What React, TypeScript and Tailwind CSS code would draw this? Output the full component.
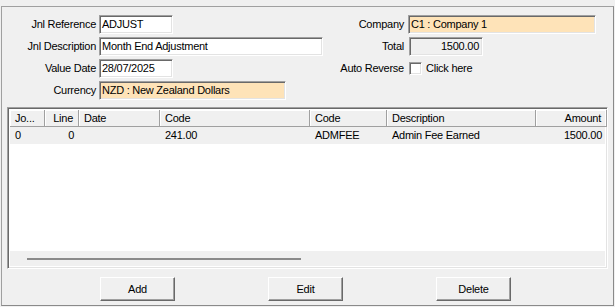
const sunken =
  "border border-t-[#a0a0a0] border-l-[#a0a0a0] border-b-white border-r-white shadow-[inset_1px_1px_0_#696969,inset_-1px_-1px_0_#e3e3e3]";

type Col = { label: string; w: string; right?: boolean };

const columns: Col[] = [
  { label: "Jo...", w: "w-[35px]" },
  { label: "Line", w: "w-[34px]", right: true },
  { label: "Date", w: "w-[81px]" },
  { label: "Code", w: "w-[150px]" },
  { label: "Code", w: "w-[77px]" },
  { label: "Description", w: "w-[149px]" },
  { label: "Amount", w: "w-[71px]", right: true },
];

const rows = [["0", "0", "", "241.00", "ADMFEE", "Admin Fee Earned", "1500.00"]];

function Field({ label, children }: { label: string; children: React.ReactNode }) {
  return (
    <div className="flex h-[19px] items-center">
      <div className="w-[94px] text-right">{label}</div>
      <div className="ml-[3px] flex h-full">{children}</div>
    </div>
  );
}

function RightField({ label, children }: { label: string; children: React.ReactNode }) {
  return (
    <div className="flex h-[19px] items-center">
      <div className="w-[81px] text-right">{label}</div>
      <div className="ml-[4px] flex h-full items-center">{children}</div>
    </div>
  );
}

function Box({ value, className }: { value: string; className: string }) {
  return <div className={`${sunken} ${className} flex h-full items-center px-[2px]`}>{value}</div>;
}

function Button({ label }: { label: string }) {
  return (
    <button className="flex h-[24px] w-[75px] items-center justify-center border border-t-white border-l-white border-b-[#696969] border-r-[#696969] bg-[#f0f0f0] shadow-[inset_-1px_-1px_0_#a0a0a0]">
      {label}
    </button>
  );
}

export default function App() {
  return (
    <div className="h-[307px] w-[615px] bg-[#f0f0f0] pt-[6px] pl-px font-['Liberation_Sans',Arial,sans-serif] text-[11px] leading-none tracking-[-0.25px] text-black">
      <div className="h-[300px] w-[613px] border border-[#a0a0a0] border-r-[#8a8a8a] border-b-[#8a8a8a]">
        <div className="flex pt-[8px]">
          <div className="flex flex-col gap-[3px]">
            <Field label="Jnl Reference">
              <Box value="ADJUST" className="w-[74px] bg-white" />
            </Field>
            <Field label="Jnl Description">
              <Box value="Month End Adjustment" className="w-[224px] bg-white" />
            </Field>
            <Field label="Value Date">
              <Box value="28/07/2025" className="w-[74px] bg-white" />
            </Field>
            <Field label="Currency">
              <Box value="NZD : New Zealand Dollars" className="w-[187px] bg-[#fee3b8]" />
            </Field>
          </div>
          <div className="flex flex-col gap-[3px]">
            <RightField label="Company">
              <Box value="C1 : Company 1" className="w-[188px] bg-[#fee3b8]" />
            </RightField>
            <RightField label="Total">
              <Box value="1500.00" className="ml-px w-[74px] justify-end bg-[#f0f0f0] pr-[3px]" />
            </RightField>
            <RightField label="Auto Reverse">
              <div className={`${sunken} ml-px h-[13px] w-[13px] bg-white`} />
              <span className="ml-[4px]">Click here</span>
            </RightField>
          </div>
        </div>

        <div className={`${sunken} mt-[7px] ml-[5px] flex h-[162px] w-[601px] flex-col bg-white p-[2px]`}>
          <div className="flex h-[17px] bg-[#f0f0f0]">
            {columns.map((c, i) => (
              <div
                key={i}
                className={`${c.w} flex shrink-0 items-center border-r border-b border-[#a0a0a0] px-[5px] shadow-[inset_1px_1px_0_white] ${c.right ? "justify-end" : ""}`}
              >
                {c.label}
              </div>
            ))}
          </div>
          {rows.map((r, ri) => (
            <div key={ri} className="flex h-[17px] bg-[#f0f0f0]">
              {r.map((v, i) => (
                <div
                  key={i}
                  className={`${columns[i].w} flex shrink-0 items-center px-[5px] ${columns[i].right ? "justify-end" : ""}`}
                >
                  {v}
                </div>
              ))}
            </div>
          ))}
          <div className="flex-1 bg-white" />
          <div className="h-[15px] bg-[#f0f0f0] pt-[7px] pl-[17px]">
            <div className="h-[2px] w-[274px] bg-[#8a8a8a]" />
          </div>
        </div>

        <div className="mt-[8px] ml-[98px] flex gap-[93px]">
          <Button label="Add" />
          <Button label="Edit" />
          <Button label="Delete" />
        </div>
      </div>
    </div>
  );
}
